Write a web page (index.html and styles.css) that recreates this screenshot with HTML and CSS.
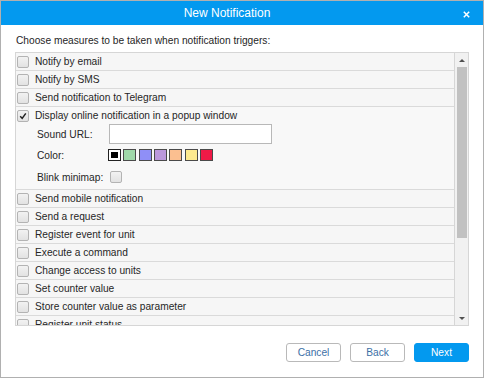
FILE: index.html
```html
<!DOCTYPE html>
<html>
<head>
<meta charset="utf-8">
<link rel="stylesheet" href="styles.css">
</head>
<body>
<div class="dialog">
  <div class="header">
    <span class="title">New Notification</span>
    <span class="close"><svg width="7" height="7" viewBox="0 0 7 7"><path d="M0.8 0.8L6.2 6.2M6.2 0.8L0.8 6.2" stroke="#fff" stroke-width="1.5" fill="none"/></svg></span>
  </div>
  <div class="body">
    <div class="intro">Choose measures to be taken when notification triggers:</div>
    <div class="list">
      <div class="rows">
        <div class="row"><span class="cb"></span><span>Notify by email</span></div>
        <div class="row"><span class="cb"></span><span>Notify by SMS</span></div>
        <div class="row"><span class="cb"></span><span>Send notification to Telegram</span></div>
        <div class="row-group">
          <div class="row-head"><span class="cb checked"><svg width="10" height="10" viewBox="0 0 10 10"><path d="M2.2 5.2L4.2 7.4L7.8 2.4" stroke="#222" stroke-width="1.5" fill="none"/></svg></span><span>Display online notification in a popup window</span></div>
          <div class="sub sub-url"><span class="lbl">Sound URL:</span><span class="input"></span></div>
          <div class="sub sub-color"><span class="lbl">Color:</span>
            <span class="swatches">
              <span class="sw sel"></span>
              <span class="sw" style="background:#9fd8a9"></span>
              <span class="sw" style="background:#8f8ff7"></span>
              <span class="sw" style="background:#bb98dc"></span>
              <span class="sw" style="background:#fbbf90"></span>
              <span class="sw" style="background:#fde98f"></span>
              <span class="sw" style="background:#ef1a47"></span>
            </span>
          </div>
          <div class="sub sub-blink"><span class="lbl">Blink minimap:</span><span class="cb"></span></div>
        </div>
        <div class="row"><span class="cb"></span><span>Send mobile notification</span></div>
        <div class="row"><span class="cb"></span><span>Send a request</span></div>
        <div class="row"><span class="cb"></span><span>Register event for unit</span></div>
        <div class="row"><span class="cb"></span><span>Execute a command</span></div>
        <div class="row"><span class="cb"></span><span>Change access to units</span></div>
        <div class="row"><span class="cb"></span><span>Set counter value</span></div>
        <div class="row"><span class="cb"></span><span>Store counter value as parameter</span></div>
        <div class="row"><span class="cb"></span><span>Register unit status</span></div>
      </div>
      <div class="scrollbar">
        <div class="arrow up"></div>
        <div class="track"><div class="thumb"></div></div>
        <div class="arrow down"></div>
      </div>
    </div>
    <div class="buttons">
      <button class="btn">Cancel</button>
      <button class="btn">Back</button>
      <button class="btn primary">Next</button>
    </div>
  </div>
</div>
</body>
</html>
```

FILE: styles.css
```css
html, body {
  margin: 0;
  padding: 0;
  background: #fff;
}
.dialog {
  width: 484px;
  height: 378px;
  box-sizing: border-box;
  border: 1px solid #b0b0b0;
  background: #fff;
  display: flex;
  flex-direction: column;
  font-family: "Liberation Sans", Arial, sans-serif;
  font-size: 10.2px;
  color: #262626;
}
.header {
  height: 24px;
  flex: none;
  background: #0399ef;
  color: #fff;
  display: flex;
  align-items: center;
  justify-content: center;
  position: relative;
  padding-right: 30px;
}
.title {
  font-size: 12px;
  line-height: 16px;
}
.close {
  position: absolute;
  right: 13px;
  top: 10px;
  width: 7px;
  height: 7px;
  display: block;
}
.close svg { display: block; }
.body {
  padding: 0 14px;
  display: flex;
  flex-direction: column;
}
.intro {
  padding-top: 9px;
  line-height: 14px;
  margin-bottom: 4px;
  padding-left: 1px;
}
.list {
  height: 274px;
  box-sizing: border-box;
  border: 1px solid #d6d6d6;
  display: flex;
}
.rows {
  flex: 1;
  overflow: hidden;
  border-right: 1px solid #d6d6d6;
}
.row, .row-head {
  height: 17px;
  display: flex;
  align-items: center;
  gap: 6px;
  padding-left: 1px;
  white-space: nowrap;
}
.row {
  background: #f6f6f6;
  border-bottom: 1px solid #dadada;
}
.row-group {
  background: #f8f8f8;
  border-bottom: 1px solid #dadada;
  height: 82px;
}
.cb {
  width: 12px;
  height: 12px;
  box-sizing: border-box;
  border: 1px solid #b3b3b3;
  border-radius: 2px;
  background: linear-gradient(#f2f2f2, #e2e2e2);
  flex: none;
  display: flex;
  align-items: center;
  justify-content: center;
}
.cb svg { display: block; }
.sub {
  display: flex;
  align-items: center;
  padding-left: 21px;
  white-space: nowrap;
}
.lbl {
  width: 72px;
  flex: none;
}
.sub-url { height: 20px; }
.input {
  width: 163px;
  height: 20px;
  box-sizing: border-box;
  border: 1px solid #b8b8b8;
  background: #fff;
}
.sub-color { height: 14px; margin-top: 4px; }
.swatches {
  display: flex;
  gap: 2.35px;
  margin-left: -1px;
}
.sw {
  width: 13px;
  height: 12px;
  box-sizing: border-box;
  border: 1px solid #4a4a4a;
}
.sw.sel {
  background: #000;
  box-shadow: inset 0 0 0 2px #fff;
  border-color: #222;
}
.sub-blink { height: 14px; margin-top: 8px; }
.sub-blink .cb { margin-left: 1px; }
.scrollbar {
  width: 13px;
  flex: none;
  background: #f1f1f1;
  display: flex;
  flex-direction: column;
}
.arrow {
  height: 14px;
  flex: none;
  display: flex;
  align-items: center;
  justify-content: center;
}
.arrow::before {
  content: "";
  width: 0;
  height: 0;
  border-left: 3px solid transparent;
  border-right: 3px solid transparent;
}
.arrow.up::before { border-bottom: 3px solid #505050; }
.arrow.down::before { border-top: 3px solid #505050; }
.track {
  flex: 1;
  padding: 0 1px 0 2px;
}
.thumb {
  height: 171px;
  background: #c1c1c1;
}
.buttons {
  display: flex;
  justify-content: flex-end;
  gap: 9px;
  margin-top: 17px;
}
.btn {
  width: 55px;
  height: 19px;
  box-sizing: border-box;
  border: 1px solid #b9b9b9;
  border-radius: 3px;
  background: #fff;
  color: #3c6fa6;
  font-family: "Liberation Sans", Arial, sans-serif;
  font-size: 10.2px;
  padding: 0;
  line-height: 17px;
}
.btn.primary {
  background: #0399ef;
  border-color: #0399ef;
  color: #fff;
}
```
